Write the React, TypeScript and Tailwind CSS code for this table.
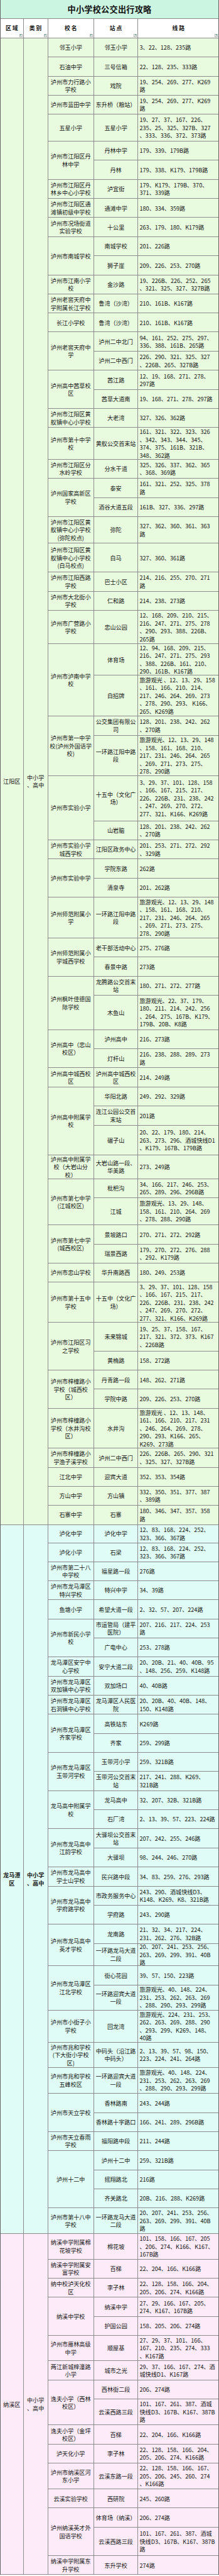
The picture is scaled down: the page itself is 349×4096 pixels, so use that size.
import React from "react";

type Stop = [string, string, number];
type School = [string, Stop[]];

// reference heights are in the 640px-wide screenshot; the page is drawn at 0.545
const S = 0.545;
const sc = (v: number) => v * S;

const jiangyang: School[] = [
  ["邻玉小学", [["邻玉小学", "3、22、128、235路", 55.8]]],
  ["石油中学", [["三号信箱", "22、128、235、333路", 55.9]]],
  ["泸州市力行路小\n学校", [["戏院", "19、254、269、277、K269\n路", 55.4]]],
  ["泸州市蓝田中学", [["东升桥（粮站）", "19、254、269、277、K269\n路", 55.9]]],
  ["五星小学", [["五星小学", "19、27、37、167、226、\n235、25、325、327B、327\n、333、336、372、373路", 78.3]]],
  ["泸州市江阳区丹\n林中学", [["丹林中学", "179、339、179B路", 55.9], ["丹林", "179、338、K179、179B路", 55.8]]],
  ["泸州市江阳区丹\n林乡中心小学校", [["泸宜街", "179、K179、179B、370、\n371、339路", 55.9]]],
  ["泸州市江阳区通\n滩镇初级中学校", [["通滩中学", "180、334、359路", 55.6]]],
  ["泸州市况场街道\n实验学校", [["十公里", "263、179、180、K179路", 55.9]]],
  ["泸州市南城学校", [["南城学校", "201、226路", 55.8], ["狮子崖", "209、226、253、270路", 55.9]]],
  ["泸州市江南小学\n校", [["金沙路", "19、226B、226、252、265\n、321、325、327、327B路", 55.4]]],
  ["泸州老窖天府中\n学附属长江学校", [["鲁湾（沙湾）", "210、161B、K167路", 55.5]]],
  ["长江小学校", [["鲁湾（沙湾）", "210、161B、K167路", 55.4]]],
  ["泸州老窖天府中\n学", [["泸州二中北门", "94、161、252、275、297、\n336、388、161B、265路", 55.9], ["泸州二中西门", "226、290、321、325、327\n、226B、265、327B路", 55.8]]],
  ["泸州高中茜草校\n区", [["茜江路", "12、19、168、271、278、\n297路", 55.8], ["茜草大道南", "19、168、271、278、297路", 55.5]]],
  ["泸州市江阳区黄\n舣镇中心小学校", [["大老湾", "327、326、362路", 55.8]]],
  ["泸州市第十中学\n校", [["黄舣公交首末站", "161、321、322、323、326\n、342、343、344、345、\n374、375、161B、321B、\n348、362路", 92.3]]],
  ["泸州市江阳区分\n水岭学校", [["分水干道", "325、326、337、362、365\n、368、369路", 55.8]]],
  ["泸州国家高新区\n学校", [["泰安", "161、321、252、325、378\n路", 55.9], ["酒谷大道五段", "161B、327、336、297路", 55.4]]],
  ["泸州市江阳区黄\n舣镇中心小学校\n(弥陀校点)", [["弥陀", "327、362、360、361、363\n路", 78.4]]],
  ["泸州市江阳区黄\n舣镇中心小学校\n(白马校点)", [["白马", "327、360、361路", 84]]],
  ["泸州市江阳西路\n学校", [["巴士小区", "214、216、255、270、271\n路", 55.8]]],
  ["泸州市大北街小\n学校", [["仁和路", "214、238、273路", 55.4]]],
  ["泸州市广营路小\n学校", [["忠山公园", "12、168、209、210、215、\n216、247、271、275、278\n、290、293、388、226B、\n265路", 98.3]]],
  ["泸州市泸南中学\n校", [
    ["体育场", "12、94、168、209、215、\n216、247、271、275、293\n、388、226B、161、210、\n290、161B、K167路", 92],
    ["白招牌", "旅游观光 、12、13、29、158\n、161、166、210、214、\n217、246、264、269、273\n、278、290、293、 K166、\n265、K269路", 118.1],
  ]],
  ["泸州市第一中学\n校(泸州外国语学\n校)", [
    ["公交集团有限公\n司", "128、201、238、242、262\n、270路", 57.1],
    ["一环路江阳中路\n段", "旅游观光、12、13、29、148\n、158、161、168、210、\n217、231、246、264、265\n、269、271、273、275、\n278、290路", 116.9],
  ]],
  ["泸州市实验小学", [
    ["十五中（文化广\n场）", "3、29、37、101、128、158\n、166、167、215、217、\n226、226B、231、238、242\n、247、269、270、272、\n277、321、K166、K269路", 131.8],
    ["山岩脑", "128、201、238、242、262\n、270路", 55.8],
  ]],
  ["泸州市实验小学\n城西学校", [["江阳区政务中心", "201、253、271、272、292\n、329路", 55.7]]],
  ["泸州市实验中学", [["学院东路", "262路", 55.5], ["清泉寺", "201、262路", 55.8]]],
  ["泸州师范附属小\n学", [["一环路江阳中路\n段", "旅游观光、12、13、29、148\n、158、161、168、210、\n217、231、246、264、265\n、269、271、273、275、\n278、290路", 119.7]]],
  ["泸州师范附属小\n学城西学校", [["老干部活动中心", "275、276路", 55.5], ["春景中路", "273路", 55.4]]],
  ["泸州枫叶佳德国\n际学校", [
    ["龙腾路公交首末\n站", "180、271、272、277路", 55.9],
    ["木鱼山", "旅游观光、22、37、179、\n180、211、214、242、256\n、264、275、167B、K179、\n179B、20B、K8路", 100],
  ]],
  ["泸州高中（忠山\n校区）", [["泸州高中", "216、273路", 56.3], ["灯杆山", "216、238、288、289、273\n路", 55.4]]],
  ["泸州高中城西校\n区", [["泸州高中城西校\n区", "214、249路", 55.7]]],
  ["泸州高中附属学\n校", [
    ["华阳北路", "249、292、329路", 55.9],
    ["连江公园公交首\n末站", "201路", 55.8],
    ["碾子山", "20、22、179、180、214、\n263、273、296、酒城快线D1\n、K179、167B、179B路", 86.8],
  ]],
  ["泸州高中附属学\n校（大岩山分\n校）", [["大岩山路一段、\n华美路", "273、249路", 69.5]]],
  ["泸州市第七中学\n(江城校区)", [
    ["枇杷沟", "34、166、217、246、253、\n265、289、296、296B路", 55.4],
    ["江城", "旅游观光、13、29、148、\n158、161、210、264、269\n、278、288、290路", 79.6],
  ]],
  ["泸州市第七中学\n(城西校区)", [["景坡路口", "270、271、272、292路", 55.8], ["瑞景西路", "179、270、272、276、288\n、292、K179路", 55.5]]],
  ["泸州市忠山学校", [["华升南路西", "180、249、253路", 55.8]]],
  ["泸州市第十五中\n学校", [["十五中（文化广\n场）", "3、29、37、101、128、158\n、166、167、215、217、\n226、226B、231、238、242\n、247、269、270、272、\n277、321、K166、K269路", 117.2]]],
  ["泸州市江阳区习\n之学校", [["未来锦城", "19、25、37、158、167、\n217、321、372、373、K167\n、226B路", 83.6], ["黄桷路", "158、272路", 55.8]]],
  ["泸州市梓橦路小\n学校（城西校\n区）", [["丹青路一段", "148、262、271路", 55.4], ["学院中路", "209、226、253、270路", 55.9]]],
  ["泸州市梓橦路小\n学校（水井沟校\n区）", [["水井沟", "旅游观光 、12、13、148、\n161、166、210、217、231\n、246、264、269、278、\n290、293、K166、265、\nK269、273路", 115.7]]],
  ["泸州市梓橦路小\n学渔子溪学校", [["泸州二中西门", "226、226B、265、290、321\n、325、327、327B路", 56.2]]],
  ["江北中学", [["迎宾大道", "352、353、354路", 55.5]]],
  ["方山中学", [["方山镇", "332、350、351、377、387\n、389路", 54.9]]],
  ["石寨中学", [["石寨", "180、346、347、357、358\n路", 56.6]]],
];

const longmatan: School[] = [
  ["泸化中学", [["泸化中学", "12、83、168、224、252、\n323、366、367路", 53.1]]],
  ["泸化小学", [["石梁", "12、83、168、224、252、\n323、366、367路", 55.4]]],
  ["泸州市第二十八\n中学校", [["福星路一段", "276路", 55.4]]],
  ["泸州市龙马潭区\n特兴学校", [["特兴中学", "34、39路", 55.5]]],
  ["鱼塘小学", [["希望大道一段", "2、32、57、207、224路", 55.8]]],
  ["泸州市新民小学\n校", [["市运管局（建平\n医院）", "207、216、217、224、253\n路", 55.5], ["广电中心", "253、278路", 55.8]]],
  ["龙马潭区安宁中\n心学校", [["安宁大道二段", "20、20B、21、40、40B、95\n、148、256、259、K148路", 55.9]]],
  ["泸州市龙马潭区\n双加镇中心学校", [["双加场口", "40、40B路", 55.4]]],
  ["泸州市龙马潭区\n石洞镇中心学校", [["龙马潭区人民医\n院", "20、20B、40、40B、148、\n150、K148路", 56.1]]],
  ["泸州市龙马潭区\n齐家学校", [["高铁站东", "K269路", 55.5], ["齐家", "259、299路", 55.8]]],
  ["泸州市龙马潭区\n玉带河学校", [["玉带河小学", "259、321B路", 55.4], ["玉带河公交首末\n站", "217、241、288、K269、\n321B路", 55.9]]],
  ["龙马高中附属学\n校", [["龙马高中", "32、207、32B、321B路", 55.8], ["石厂湾", "2、13、39、57、223、224路", 55.5]]],
  ["泸州市龙马高中\n江韵学校", [["大驿坝公交首末\n站", "207、242、255、246路", 55.8], ["大驿坝", "98、244、246、270路", 55.9]]],
  ["泸州市龙马高中\n学士山学校", [["民兴路中段", "34、83、259、276、293路", 55.8]]],
  ["泸州市龙马高中\n学府路学校", [["市政务服务中心", "243、290、酒城快线D3、\nK148、K269、K8、321B路", 55.4], ["学府路", "243、290路", 55.5]]],
  ["泸州市龙马高中\n英才学校", [
    ["龙南路", "21、32、34、217、224、\n231、262、276、32B路", 56.1],
    ["一环路龙马大道\n二段", "20、207、241、253、256、\n263、269、299、391、40B\n路", 65.5],
  ]],
  ["泸州市龙马潭区\n江北学校", [
    ["街心花园", "39、57、150、223路", 55.8],
    ["一环路迎宾大道\n一段", "旅游观光、40、148、224、\n231、253、262、263、269\n、288、290、293、299路", 73.2],
  ]],
  ["泸州市小街子小\n学校", [["回龙湾", "旅游观光、224、231、253、\n262、263、269、288、290\n、293、299、K269、148、\n40路", 94.4]]],
  ["泸州市兆和学校\n(下大街小学校\n区)", [["中码头（沿江路\n中码头）", "2、13、39、57、98、150、\n223、224、241、264路", 73.1]]],
  ["泸州市兆和学校\n五峰校区", [["一环路迎宾大道\n一段", "旅游观光、40、148、224、\n231、253、262、263、269\n、288、290、293、299路", 75.5]]],
  ["泸州市天立学校", [["香林路南", "243、244路", 55.9], ["香林路十字路口", "166、241、289、296B路", 55.4]]],
  ["泸州市天立春雨\n学校", [["福阳路中段", "211、244路", 56.1]]],
  ["泸州十二中", [["泸州十二中", "259、321B路", 55.9], ["摇翔路北", "216路", 55.4], ["齐关路北", "20B、216、288、K269路", 55.9]]],
  ["泸州市第十八中\n学校", [["一环路龙马大道\n二段", "20、207、241、253、256、\n263、269、299、391、40B\n路", 74.7]]],
];

const naxi: School[] = [
  ["纳溪中学附属棉\n花坡学校", [["棉花坡", "101、158、166、167、205\n、206、274、K166、K167、\n167B路", 74.3]]],
  ["纳溪中学附属安\n富学校", [["百梯", "22、204、166、K166路", 55.8]]],
  ["纳中校泸天化校\n区", [["李子林", "22、128、158、166、204、\n205、206、274、K166路", 55.9]]],
  ["纳溪中学校", [["纳溪中学", "27、29、166、167、205、\n274、K167、167B路", 55.4], ["护国公园", "158、205、206、274路", 55.9]]],
  ["泸州市雁林高级\n中学", [["顺屋基", "27、29、37、101、166、\n167、210、235、274、333\n、K167路", 74]]],
  ["两江新城梓潼路\n小学", [["城市之光", "29、37、166、167、274、酒\n城快线D1、K167路", 55.9]]],
  ["逸夫小学（西林\n校区）", [
    ["西林街二段", "206、274路", 55.5],
    ["云溪西路三段", "101、167、261、387、酒城\n快线D3、167B、K167、387B\n路", 75.5],
  ]],
  ["逸夫小学（金坪\n校区）", [["百梯", "22、204、166、K166路", 56]]],
  ["泸天化小学", [["李子林", "22、128、158、166、204、\n205、206、274、K166路", 55.9]]],
  ["泸州市纳溪区河\n东小学", [["云溪东路一段", "22、128、158、166、167、\n205、206、245、260、274\n、K166路", 75.1]]],
  ["云溪实验学校", [["西研院", "245、260路", 55.5]]],
  ["泸州纳溪英才外\n国语学校", [
    ["体育场（纳溪）", "206、274路", 55.9],
    ["云溪西路三段", "101、167、261、387、酒城\n快线D3、167B、K167、387B\n路", 83.7],
  ]],
  ["纳溪中学附属东\n升学校", [["东升学校", "274路", 55.1]]],
];

function SchoolRow({ school }: { school: School }) {
  const [name, stops] = school;
  const total = stops.reduce((a, s) => a + s[2], 0);
  return (
    <div className="flex border-b border-[#8c8c8c]" style={{ height: sc(total) }}>
      <div className="w-[73px] shrink-0 border-r border-[#8c8c8c] flex items-center justify-center text-center whitespace-pre">
        {name}
      </div>
      <div className="flex-1 min-w-0 flex flex-col">
        {stops.map(([st, routes, h], i) => {
          const last = i === stops.length - 1;
          return (
            <div
              key={i}
              className={last ? "flex flex-1 min-h-0" : "flex shrink-0 border-b border-[#8c8c8c]"}
              style={last ? undefined : { height: sc(h) }}
            >
              <div className="w-[70.8px] shrink-0 border-r border-[#8c8c8c] flex items-center justify-center text-center whitespace-pre">
                {st}
              </div>
              <div className="flex-1 min-w-0 flex items-center pl-[2px] whitespace-pre">{routes}</div>
            </div>
          );
        })}
      </div>
    </div>
  );
}

function Section({
  region,
  cat,
  bg,
  bold,
  schools,
}: {
  region: string;
  cat: string;
  bg: string;
  bold?: boolean;
  schools: School[];
}) {
  return (
    <div className={`flex ${bg}`}>
      <div
        className={`w-[36.5px] shrink-0 border-r border-b border-[#8c8c8c] flex items-center justify-center text-center whitespace-pre ${bold ? "font-bold" : ""}`}
      >
        {region}
      </div>
      <div
        className={`w-[39.2px] shrink-0 border-r border-b border-[#8c8c8c] flex items-center justify-center text-center whitespace-pre ${bold ? "font-bold" : ""}`}
      >
        {cat}
      </div>
      <div className="flex-1 min-w-0 flex flex-col">
        {schools.map((s, i) => (
          <SchoolRow key={i} school={s} />
        ))}
      </div>
    </div>
  );
}

function FilterBtn() {
  return (
    <span className="absolute right-[1px] bottom-[1px] w-[5px] h-[5px] border border-[#b4b4b4] bg-[#f4f4f4] flex items-center justify-center">
      <span className="w-0 h-0 border-l-[1.5px] border-r-[1.5px] border-t-[2px] border-l-transparent border-r-transparent border-t-[#2a8f7e]" />
    </span>
  );
}

function HeadCell({ label, w }: { label: string; w: string }) {
  return (
    <div className={`relative ${w} border-r border-[#8c8c8c] flex items-center justify-center font-bold text-[8.8px]`}>
      {label}
      <FilterBtn />
    </div>
  );
}

export default function App() {
  return (
    <div className="w-[349px] bg-white text-[#141414] font-['Noto_Sans_CJK_SC','Noto_Sans',sans-serif] text-[9.1px] leading-[12.5px]">
      <div className="border-l border-r border-[#666]">
        {/* 标题 */}
        <div className="h-[30.2px] bg-[#ccf5e1] border-b border-[#8c8c8c] flex items-center justify-center">
          <h1 className="text-[13.2px] font-bold tracking-[0.2px] leading-none">中小学校公交出行攻略</h1>
        </div>

        {/* 表头 */}
        <div className="h-[30.5px] flex bg-white border-b border-[#8c8c8c]">
          <HeadCell label="区 域" w="w-[36.5px] shrink-0" />
          <HeadCell label="类 别" w="w-[39.2px] shrink-0" />
          <HeadCell label="校 名" w="w-[73px] shrink-0" />
          <HeadCell label="站 点" w="w-[70.8px] shrink-0" />
          <div className="relative flex-1 flex items-center justify-center font-bold text-[8.8px]">
            线 路
            <FilterBtn />
          </div>
        </div>

        {/* 江阳区 */}
        <Section region="江阳区" cat={"中小学\n、高中"} bg="bg-[#e9fbdf]" schools={jiangyang} />

        {/* 龙马潭区 */}
        <Section region={"龙马潭\n区"} cat={"中小学\n、高中"} bg="bg-[#dffdf6]" bold schools={longmatan} />

        {/* 纳溪区 */}
        <Section region="纳溪区" cat={"中小学\n、高中"} bg="bg-[#fdebf9]" schools={naxi} />
      </div>
    </div>
  );
}
